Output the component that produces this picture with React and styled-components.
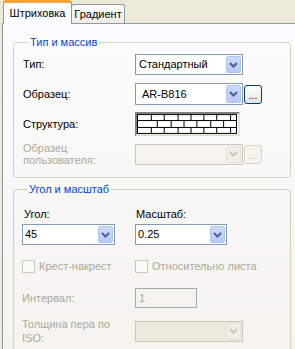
import React from "react";
import styled, { createGlobalStyle } from "styled-components";

const Global = createGlobalStyle`
  html, body { margin: 0; padding: 0; }
  body {
    background: #ece9d8;
    font-family: "Liberation Sans", Arial, sans-serif;
    font-size: 11px;
    color: #000;
  }
`;

const Window = styled.div`
  width: 295px;
  height: 349px;
  overflow: hidden;
  background: #ece9d8;
  display: flex;
  flex-direction: column;
`;

const TabStrip = styled.div`
  display: flex;
  align-items: flex-end;
  height: 27px;
  padding-left: 3px;
  position: relative;
  z-index: 1;
`;

const Tab = styled.div`
  box-sizing: border-box;
  display: flex;
  align-items: center;
  justify-content: center;
  border: 1px solid #919b9c;
  border-bottom: none;
  border-radius: 3px 3px 0 0;
  width: ${p => p.$w}px;
  height: ${p => (p.$active ? 24 : 19)}px;
  margin-bottom: ${p => (p.$active ? -1 : 0)}px;
  margin-left: ${p => (p.$active ? 0 : -1)}px;
  padding-bottom: ${p => (p.$active ? 2 : 0)}px;
  background: ${p =>
    p.$active ? "#fcfcfe" : "linear-gradient(#ffffff, #ecebe6)"};
  border-top: ${p => (p.$active ? "3px solid #f5a53a" : "1px solid #919b9c")};
  font-size: 11px;
`;

const Panel = styled.div`
  flex: 1;
  width: 320px;
  margin-left: 2px;
  box-sizing: border-box;
  border: 1px solid #919b9c;
  background: linear-gradient(#fcfcfe, #f4f3ee);
  padding: 12px 0 0 10px;
  display: flex;
  flex-direction: column;
  gap: 5px;
`;

const Group = styled.fieldset`
  margin: 0;
  width: 278px;
  box-sizing: border-box;
  border: 1px solid #d0d0bf;
  border-radius: 4px;
  padding: ${p => p.$pad};
  min-inline-size: 0;
`;

const Legend = styled.legend`
  color: #0046d5;
  padding: 0 2px;
  margin-left: 5px;
  line-height: 13px;
`;

const Row = styled.div`
  display: grid;
  grid-template-columns: ${p => p.$label || 112}px auto;
  align-items: center;
  margin-top: ${p => p.$mt || 0}px;
`;

const Label = styled.span`
  color: ${p => (p.$disabled ? "#aca899" : "#000")};
  line-height: ${p => p.$lh || 13}px;
  padding-left: ${p => p.$indent || 0}px;
`;

const Controls = styled.div`
  display: flex;
  align-items: center;
  gap: 1px;
`;

const Combo = styled.div`
  box-sizing: border-box;
  width: ${p => p.$w}px;
  height: ${p => p.$h || 21}px;
  border: 1px solid ${p => (p.$disabled ? "#c9c7ba" : "#7f9db9")};
  background: ${p => p.$bg || (p.$disabled ? "#f4f3ee" : "#fff")};
  display: flex;
  align-items: center;
  justify-content: space-between;
  padding: 1px 1px 1px ${p => p.$pad ?? 3}px;
`;

const ComboText = styled.span`
  line-height: 13px;
  white-space: nowrap;
`;

const ArrowBtn = styled.div`
  box-sizing: border-box;
  width: 15px;
  height: 100%;
  border-radius: 2px;
  border: 1px solid ${p => (p.$disabled ? "#e3e2da" : "#b2c4f2")};
  background: ${p =>
    p.$disabled ? "#efeee8" : "linear-gradient(#cdd9fc, #b6c9f7)"};
  display: flex;
  align-items: center;
  justify-content: center;
`;

const DotsBtn = styled.div`
  box-sizing: border-box;
  width: 18px;
  height: 19px;
  border-radius: 3px;
  border: 1px solid ${p => (p.$disabled ? "#d5d3c8" : "#003c74")};
  background: ${p =>
    p.$disabled ? "#f5f4ee" : "linear-gradient(#ffffff, #e6e5de)"};
  color: ${p => (p.$disabled ? "#c0beb2" : "#000")};
  display: flex;
  align-items: flex-end;
  justify-content: center;
  font-size: 10px;
  line-height: 13px;
  padding-bottom: 1px;
`;

const Swatch = styled.div`
  box-sizing: border-box;
  width: 105px;
  height: 24px;
  border: 2px solid;
  border-color: #7f7f7f #e2e0d6 #e2e0d6 #7f7f7f;
  background: #fff;
  display: flex;
  align-items: flex-start;
  padding: 0 1px 0 0;
`;

const Columns = styled.div`
  display: grid;
  grid-template-columns: 113px auto;
  margin-top: ${p => p.$mt || 0}px;
`;

const Field = styled.div`
  display: flex;
  flex-direction: column;
  gap: 3px;
`;

const Check = styled.label`
  display: flex;
  align-items: center;
  gap: 4px;
  color: #aca899;
  line-height: 13px;
`;

const Box = styled.span`
  box-sizing: border-box;
  width: 13px;
  height: 13px;
  border: 1px solid #cac8bb;
  background: #fbfbf8;
`;

const TextBox = styled.div`
  box-sizing: border-box;
  width: 62px;
  height: 20px;
  border: 1px solid #a3abb8;
  background: #f4f3ee;
  color: #aca899;
  padding: 2px 3px;
  line-height: 14px;
`;

const Chevron = ({ disabled }) => (
  <svg width="9" height="6" viewBox="0 0 9 6">
    <path
      d="M1 1 L4.5 4.5 L8 1"
      fill="none"
      stroke={disabled ? "#c9c7ba" : "#4d6185"}
      strokeWidth="2"
    />
  </svg>
);

const Bricks = () => {
  const rowA = [14, 27, 41, 54, 67, 80, 94];
  const rowB = [20, 34, 47, 60, 74, 87];
  const v = (xs, y1, y2) =>
    xs.map(x => <line key={x + "-" + y1} x1={x + 0.5} y1={y1} x2={x + 0.5} y2={y2} />);
  return (
    <svg width="101" height="20" viewBox="0 0 101 20">
      <g stroke="#000" strokeWidth="1" fill="none">
        <rect x="0.5" y="0.5" width="100" height="19" />
        <line x1="0" y1="6.5" x2="101" y2="6.5" />
        <line x1="0" y1="13.5" x2="101" y2="13.5" />
        {v(rowA, 0, 7)}
        {v(rowB, 7, 14)}
        {v(rowA, 14, 20)}
      </g>
    </svg>
  );
};

const ComboBox = ({ value, w, h, disabled, bg, pad }) => (
  <Combo $w={w} $h={h} $disabled={disabled} $bg={bg} $pad={pad}>
    <ComboText>{value}</ComboText>
    <ArrowBtn $disabled={disabled}>
      <Chevron disabled={disabled} />
    </ArrowBtn>
  </Combo>
);

export default function App() {
  return (
    <>
      <Global />
      <Window>
        <TabStrip>
          <Tab $active $w={69}>Штриховка</Tab>
          <Tab $w={54}>Градиент</Tab>
        </TabStrip>
        <Panel>
          <Group $pad="5px 0 11px 9px">
            <Legend>Тип и массив</Legend>
            <Row>
              <Label>Тип:</Label>
              <ComboBox value="Стандартный" w={108} />
            </Row>
            <Row $mt={8}>
              <Label>Образец:</Label>
              <Controls>
                <ComboBox value="AR-B816" w={108} h={22} pad={6} />
                <DotsBtn>...</DotsBtn>
              </Controls>
            </Row>
            <Row $mt={7}>
              <Label>Структура:</Label>
              <Swatch>
                <Bricks />
              </Swatch>
            </Row>
            <Row $mt={6}>
              <Label $disabled $lh={12}>
                Образец
                <br />
                пользователя:
              </Label>
              <Controls>
                <ComboBox value="" w={108} disabled />
                <DotsBtn $disabled>...</DotsBtn>
              </Controls>
            </Row>
          </Group>
          <Group $pad="12px 0 7px 8px">
            <Legend>Угол и масштаб</Legend>
            <Columns>
              <Field>
                <Label $indent={2}>Угол:</Label>
                <ComboBox value="45" w={93} pad={2} />
              </Field>
              <Field>
                <Label $indent={1}>Масштаб:</Label>
                <ComboBox value="0.25" w={92} pad={2} />
              </Field>
            </Columns>
            <Columns $mt={15}>
              <Check>
                <Box />
                Крест-накрест
              </Check>
              <Check>
                <Box />
                Относительно листа
              </Check>
            </Columns>
            <Row $label={113} $mt={15}>
              <Label $disabled>Интервал:</Label>
              <TextBox>1</TextBox>
            </Row>
            <Row $label={113} $mt={9}>
              <Label $disabled $lh={14}>
                Толщина пера по
                <br />
                ISO:
              </Label>
              <ComboBox value="" w={108} disabled bg="#ebe9dc" />
            </Row>
          </Group>
        </Panel>
      </Window>
    </>
  );
}
